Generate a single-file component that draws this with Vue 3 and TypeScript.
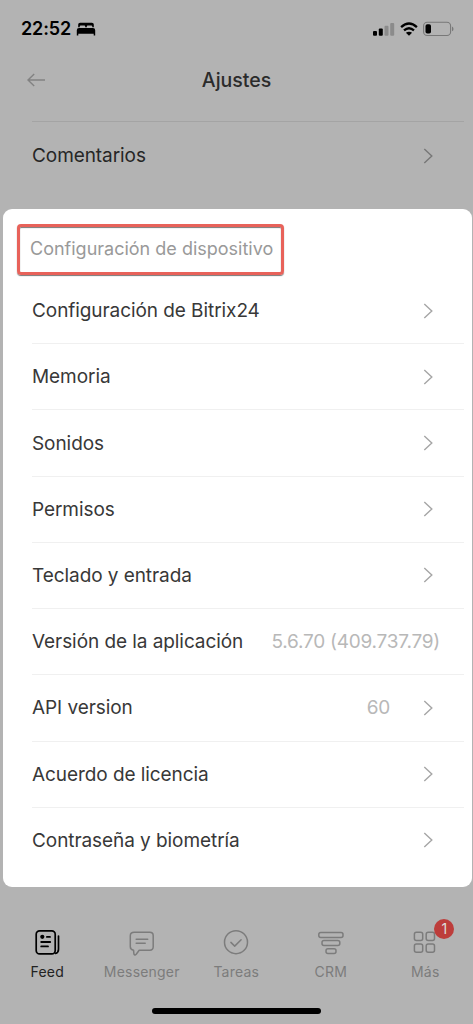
<script setup lang="ts">
interface Row {
  label: string
  value?: string
  arrow: boolean
}

const rows: Row[] = [
  { label: 'Configuración de Bitrix24', arrow: true },
  { label: 'Memoria', arrow: true },
  { label: 'Sonidos', arrow: true },
  { label: 'Permisos', arrow: true },
  { label: 'Teclado y entrada', arrow: true },
  { label: 'Versión de la aplicación', value: '5.6.70 (409.737.79)', arrow: false },
  { label: 'API version', value: '60', arrow: true },
  { label: 'Acuerdo de licencia', arrow: true },
  { label: 'Contraseña y biometría', arrow: true },
]

const tabs = ['Feed', 'Messenger', 'Tareas', 'CRM', 'Más']
</script>

<template>
  <div class="screen">
    <header class="status">
      <span class="time">22:52</span>
      <svg class="bed" width="20" height="14" viewBox="0 0 20 14">
        <path d="M2.2 5.2V2.6Q2.2.7 4.1.7h11.8q1.9 0 1.9 1.9v2.6h-1.5V4.4q0-1-1-1h-3.6q-.9 0-.9.9v.9H9.2v-.9q0-.9-.9-.9H4.7q-1 0-1 1v.8z" />
        <path d="M.8 13.4V8.3Q.8 6 3.1 6h13.8q2.3 0 2.3 2.3v5.1h-1.5v-1.7H2.3v1.7z" />
      </svg>
      <svg class="signal" width="22" height="14" viewBox="0 0 22 14">
        <rect x="0" y="9" width="4" height="4.8" rx="1" />
        <rect x="5.8" y="6.4" width="4" height="7.4" rx="1" />
        <rect x="11.5" y="3.8" width="4" height="10" rx="1" fill="#8b8b8b" />
        <rect x="17.2" y="1" width="4" height="12.8" rx="1" fill="#8b8b8b" />
      </svg>
      <svg class="wifi" width="18" height="14" viewBox="0 0 18 14">
        <path d="M1.1 5.2Q9-2.1 16.9 5.2M4 8.4q5-4.4 10 0" fill="none" stroke="#000" stroke-width="2.3" />
        <path d="M5.9 10.8q3.1-2.3 6.2 0L9 13.8z" />
      </svg>
      <svg class="battery" width="31" height="16" viewBox="0 0 31 16">
        <rect x=".6" y="1.3" width="27" height="13.2" rx="3.6" fill="none" stroke="#787878" stroke-width="1.1" />
        <rect x="2.5" y="3.2" width="5.5" height="9.4" rx="1.8" />
        <path d="M29 5.5q1.5.8 1.5 2.4T29 10.3z" fill="#787878" />
      </svg>
    </header>

    <nav class="titlebar">
      <svg class="back" width="19" height="14" viewBox="0 0 19 14">
        <path d="M18 7H1M7.2 1 1 7l6.2 6" fill="none" stroke="#828282" stroke-width="1.4" />
      </svg>
      <h1>Ajustes</h1>
    </nav>

    <div class="row comments">
      <span class="label">Comentarios</span>
      <svg class="chev" width="11" height="16" viewBox="0 0 11 16">
        <path d="M1.3 1 8.8 8l-7.5 7" fill="none" stroke="#777" stroke-width="1.4" />
      </svg>
    </div>

    <main class="card">
      <h2 class="heading">Configuración de dispositivo</h2>
      <div v-for="row in rows" :key="row.label" class="row">
        <span class="label">{{ row.label }}</span>
        <span v-if="row.value" class="value" :class="{ edge: !row.arrow }">{{ row.value }}</span>
        <svg v-if="row.arrow" class="chev" width="11" height="16" viewBox="0 0 11 16">
          <path d="M1.3 1 8.8 8l-7.5 7" fill="none" stroke="#a6a6a6" stroke-width="1.4" />
        </svg>
      </div>
    </main>

    <footer class="tabs">
      <div v-for="(tab, i) in tabs" :key="tab" class="tab" :class="{ active: i === 0 }">
        <span class="glyph">
          <svg width="28" height="28" viewBox="0 0 28 28" fill="none" stroke="currentColor" stroke-width="1.5" stroke-linecap="round" stroke-linejoin="round">
            <g v-if="i === 0">
              <rect x="3.2" y="2.9" width="19" height="23" rx="3.4" stroke-width="1.7" />
              <path d="M22.4 25.4q3.1-.7 3.1-4.2V8.1" stroke-width="1.7" />
              <circle cx="9.3" cy="8.8" r="2.1" fill="currentColor" stroke="none" />
              <path d="M13.9 8.9h3.1M8.2 14h9M8.2 18.4h6.8" stroke-width="1.8" />
            </g>
            <g v-else-if="i === 1">
              <path d="M6.2 4.3h15.6q3.4 0 3.4 3.4v11.1q0 3.4-3.4 3.4H11.2l-3 4q-1.4 1.5-2.1.2-.4-1.1-.5-4.2-3.3-.4-3.3-3.4V7.7q0-3.4 3.9-3.4z" />
              <path d="M8.2 11.3h11.5M8.2 15.3h9" />
            </g>
            <g v-else-if="i === 2">
              <circle cx="14" cy="14.2" r="11.5" />
              <path d="m8.9 14.4 3.8 3.7 6.4-6.3" />
            </g>
            <g v-else-if="i === 3">
              <rect x="1.8" y="4.5" width="24.2" height="5" rx="2" />
              <rect x="5" y="12.6" width="17.8" height="5" rx="2" />
              <rect x="9" y="20.8" width="10" height="4.8" rx="2" />
            </g>
            <g v-else>
              <rect x="3.4" y="4.3" width="8.3" height="8.3" rx="2" />
              <rect x="15.2" y="4.3" width="8.3" height="8.3" rx="2" />
              <rect x="3.4" y="16" width="8.3" height="8.3" rx="2" />
              <rect x="15.2" y="16" width="8.3" height="8.3" rx="2" />
            </g>
          </svg>
          <b v-if="i === 4" class="badge">1</b>
        </span>
        <span class="name">{{ tab }}</span>
      </div>
    </footer>
    <div class="home"></div>
  </div>
</template>

<style>
body {
  margin: 0;
  background: #b3b3b3;
}
</style>

<style scoped>
.screen {
  width: 473px;
  height: 1024px;
  overflow: hidden;
  box-sizing: border-box;
  display: flex;
  flex-direction: column;
  background: #b3b3b3;
  font-family: Inter, "Liberation Sans", sans-serif;
  color: #383838;
}
.screen > * {
  flex-shrink: 0;
}
svg {
  display: block;
}
.status {
  height: 56px;
  box-sizing: border-box;
  padding: 1px 19px 0 21px;
  display: flex;
  align-items: center;
}
.time {
  color: #000;
  font-size: 18px;
  font-weight: 600;
  letter-spacing: -0.15px;
}
.bed {
  margin-left: 5px;
}
.signal {
  margin-left: auto;
}
.wifi {
  margin-left: 5px;
}
.battery {
  margin-left: 5px;
}
.titlebar {
  height: 65px;
  box-sizing: border-box;
  padding: 0 27px 17px;
  display: grid;
  grid-template-columns: 60px 1fr 60px;
  align-items: center;
}
h1 {
  margin: 0;
  text-align: center;
  font-size: 19.5px;
  font-weight: 500;
  color: #2b2b2b;
}
.row {
  height: 66.22px;
  box-sizing: border-box;
  margin-left: 29px;
  margin-right: 8px;
  border-top: 1.5px solid #f0f0f0;
  display: flex;
  align-items: center;
  font-size: 19px;
}
.label {
  flex: 1;
  white-space: nowrap;
  letter-spacing: -0.07px;
}
.heading + .row {
  border-top-color: transparent;
}
.value {
  color: #b8b8b8;
  white-space: nowrap;
  letter-spacing: -0.23px;
}
.value + .chev {
  margin-left: 33px;
}
.value.edge {
  margin-right: 24px;
}
.chev {
  margin-right: 30px;
}
.comments {
  height: 87px;
  margin-left: 32px;
  margin-right: 9px;
  padding-bottom: 19px;
  border-top: 1px solid #a4a4a4;
  color: #262626;
}
.card {
  margin: 1px 1px 0 3px;
  height: 678px;
  box-sizing: border-box;
  padding-top: 15px;
  border-radius: 9px;
  background: #fff;
  box-shadow: 0 0 1px #bbb;
}
.heading {
  width: 267px;
  height: 51px;
  box-sizing: border-box;
  margin: 0 0 2px 14px;
  padding: 0 0 3px 10px;
  border: 3px solid #e8625a;
  border-radius: 4px;
  box-shadow: 0 1px 1px #777, inset 0 1px 1px #777;
  display: flex;
  align-items: center;
  font-size: 18px;
  font-weight: 400;
  color: #999;
  white-space: nowrap;
}
.tabs {
  height: 97px;
  display: flex;
  padding-top: 41px;
  box-sizing: border-box;
}
.tab {
  width: 94.5px;
  display: flex;
  flex-direction: column;
  align-items: center;
  color: #7c7c7c;
}
.glyph {
  position: relative;
}
.badge {
  position: absolute;
  left: 23px;
  top: -9px;
  width: 20px;
  height: 20px;
  border-radius: 50%;
  background: #bd3d3b;
  color: #ddd;
  font-size: 14px;
  font-weight: 400;
  line-height: 20px;
  text-align: center;
}
.name {
  margin-top: 7px;
  font-size: 14px;
  line-height: 18px;
  letter-spacing: 0.2px;
}
.active {
  color: #000;
}
.active .name {
  color: #222;
}
.home {
  width: 169px;
  height: 6px;
  margin: 24px 0 0 152px;
  border-radius: 3px;
  background: #000;
}
</style>
